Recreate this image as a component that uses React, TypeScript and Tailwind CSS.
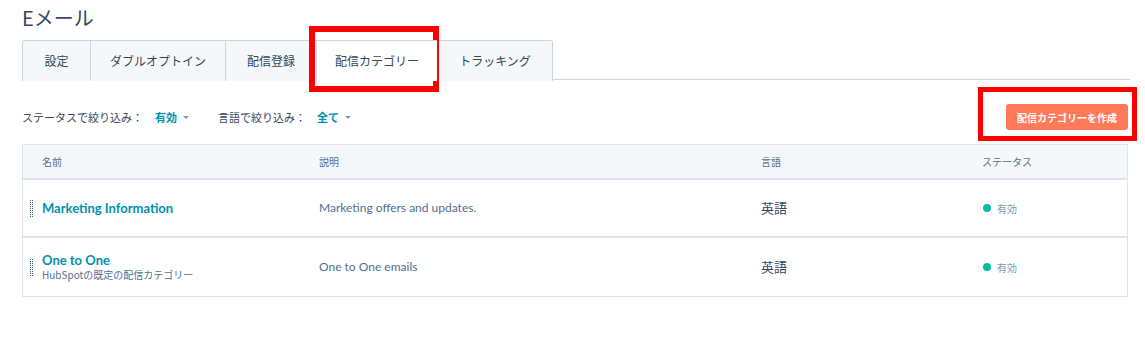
import { ReactNode } from "react";

const jp = { fontFamily: '"Noto Sans CJK JP", "Noto Sans", sans-serif' };
const lat = { fontFamily: 'Lato, "Noto Sans CJK JP", sans-serif' };

const tabs = ["設定", "ダブルオプトイン", "配信登録", "配信カテゴリー", "トラッキング"];
const tabWidths = ["w-[68px]", "w-[135px]", "w-[91px]", "w-[121px]", "w-[116px]"];

const rows = [
  { name: "Marketing Information", sub: "", desc: "Marketing offers and updates.", lang: "英語" },
  { name: "One to One", sub: "HubSpotの既定の配信カテゴリー", desc: "One to One emails", lang: "英語" },
];

function Caret() {
  return <span className="ml-[6px] inline-block border-x-[3px] border-t-[3px] border-x-transparent border-t-[#7c98b6] align-middle" />;
}

// drag handle, two columns of small dots
function Handle() {
  return (
    <div className="grid grid-cols-2 gap-x-[1px] gap-y-[1px]">
      {Array.from({ length: 18 }).map((_, i) => (
        <span key={i} className="block h-[1px] w-[1px] bg-[#425b76]" />
      ))}
    </div>
  );
}

function Cell({ className, children }: { className: string; children: ReactNode }) {
  return <div className={`flex items-center ${className}`}>{children}</div>;
}

export default function App() {
  return (
    <div className="relative h-[347px] w-[1145px] overflow-hidden bg-white text-[#33475b]" style={jp}>
      <div className="px-[22px] pt-[4px]">
        <h1 className="text-[20px] leading-[28px] font-normal text-[#33475b]">Eメール</h1>

        <div className="mt-[8px] flex h-[40px] w-[1108px] border-b border-[#cbd6e2]">
          {tabs.map((t, i) => {
            const active = i === 3;
            return (
              <div
                key={t}
                className={`flex h-[41px] items-center justify-center border-t border-l text-[12px] ${tabWidths[i]} ${
                  active
                    ? "relative z-10 border-[#cbd6e2] bg-white"
                    : "border-[#cbd6e2] bg-[#f5f8fa]"
                } ${i === 4 ? "border-r rounded-tr-[3px]" : ""} ${i === 0 ? "rounded-tl-[3px]" : ""}`}
              >
                {t}
              </div>
            );
          })}
        </div>

        <div className="mt-[24px] flex h-[26px] items-center justify-between">
          <div className="flex items-center text-[11px]">
            <span>ステータスで絞り込み：</span>
            <span className="ml-[12px] font-bold text-[#0091ae]">有効</span>
            <Caret />
            <span className="ml-[29px]">言語で絞り込み：</span>
            <span className="ml-[11px] font-bold text-[#0091ae]">全て</span>
            <Caret />
          </div>
          <button className="mr-[-5px] flex h-[26px] w-[122px] items-center justify-center rounded-[3px] bg-[#ff7a59] text-[10px] font-bold text-white">
            配信カテゴリーを作成
          </button>
        </div>

        <div className="mt-[14px] w-[1106px] border border-[#dfe3eb]">
          <div className="flex h-[35px] border-b-2 border-[#dfe3eb] bg-[#f5f8fa] text-[10px] text-[#516f90]">
            <Cell className="w-[276px] pl-[19px]">名前</Cell>
            <Cell className="w-[442px] pl-[20px]">説明</Cell>
            <Cell className="w-[222px] pl-[20px]">言語</Cell>
            <Cell className="flex-1 pl-[19px]">ステータス</Cell>
          </div>
          {rows.map((r, i) => (
            <div
              key={r.name}
              className={`flex h-[58px] ${i === 0 ? "border-b-2 border-[#dfe3eb]" : ""}`}
            >
              <Cell className="w-[276px] pl-[7px]">
                <Handle />
                <div className="ml-[9px] flex flex-col">
                  <span className="text-[13px] leading-[16px] font-bold text-[#0091ae]" style={lat}>
                    {r.name}
                  </span>
                  {r.sub && <span className="text-[10px] leading-[14px] text-[#516f90]">{r.sub}</span>}
                </div>
              </Cell>
              <Cell className="w-[442px] pl-[20px] text-[12px] text-[#516f90]">
                <span style={lat}>{r.desc}</span>
              </Cell>
              <Cell className="w-[222px] pl-[20px] text-[13px] text-[#33475b]">{r.lang}</Cell>
              <Cell className="flex-1 pl-[20px] text-[10px] text-[#7c98b6]">
                <span className="mr-[6px] h-[8px] w-[8px] rounded-full bg-[#00bda5]" />
                有効
              </Cell>
            </div>
          ))}
        </div>
      </div>

      <div className="pointer-events-none absolute left-[309px] top-[26px] h-[66px] w-[130px] border-[6px] border-[#ff0000]" />
      <div className="pointer-events-none absolute left-[978px] top-[87px] h-[54px] w-[159px] border-[5px] border-[#ff0000]" />
    </div>
  );
}
